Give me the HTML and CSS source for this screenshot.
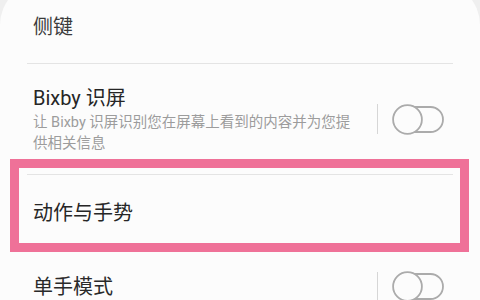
FILE: index.html
```html
<!DOCTYPE html>
<html lang="zh">
<head>
<meta charset="utf-8">
<link rel="stylesheet" href="styles.css">
</head>
<body>
<div class="card">
  <div class="list">
    <div class="row row-top"><span class="title">侧键</span></div>
    <div class="divider"></div>
    <div class="row row-bixby">
      <div class="text">
        <div class="title">Bixby 识屏</div>
        <div class="sub">让 Bixby 识屏识别您在屏幕上看到的内容并为您提供相关信息</div>
      </div>
      <div class="sep"></div>
      <svg class="toggle" width="52" height="31" viewBox="0 0 52 31">
        <rect x="4" y="3" width="47" height="25" rx="12.5" fill="none" stroke="#ababab" stroke-width="1.8"/>
        <circle cx="15.5" cy="15.5" r="14.4" fill="#fcfcfc" stroke="#ababab" stroke-width="1.8"/>
      </svg>
    </div>
    <div class="divider"></div>
    <div class="row row-motion"><span class="title">动作与手势</span></div>
    <div class="divider"></div>
    <div class="row row-one">
      <div class="text"><span class="title">单手模式</span></div>
      <div class="sep"></div>
      <svg class="toggle" width="52" height="31" viewBox="0 0 52 31">
        <rect x="4" y="3" width="47" height="25" rx="12.5" fill="none" stroke="#ababab" stroke-width="1.8"/>
        <circle cx="15.5" cy="15.5" r="14.4" fill="#fcfcfc" stroke="#ababab" stroke-width="1.8"/>
      </svg>
    </div>
    <div class="highlight"></div>
  </div>
</div>
</body>
</html>
```
FILE: styles.css
```css
html, body {
  margin: 0;
  padding: 0;
  background: #efefef;
  font-family: Roboto, "Noto Sans CJK SC", sans-serif;
  overflow: hidden;
}
.card {
  margin-top: -18px;
  padding-top: 18px;
  background: #fcfcfc;
  border-radius: 43px 43px 0 0;
  min-height: 340px;
}
.list {
  position: relative;
}
.row {
  display: flex;
  align-items: center;
  box-sizing: border-box;
  padding-left: 33px;
  padding-right: 36px;
}
.title {
  font-size: 20px;
  line-height: 28px;
  color: #262626;
}
.row-top {
  height: 63px;
  align-items: flex-start;
  padding-top: 13px;
}
.row-top .title {
  color: #3a3a3a;
}
.divider {
  height: 1px;
  margin: 0 27px;
  background: #e4e4e4;
}
.row-bixby {
  padding-top: 20px;
  padding-bottom: 20px;
}
.text {
  flex: 1;
  min-width: 0;
  padding-right: 14px;
}
.sub {
  font-size: 14.5px;
  line-height: 21px;
  color: #9c9c9c;
}
.sep {
  width: 1px;
  height: 30px;
  background: #d6d6d6;
  margin-right: 14px;
  flex: none;
}
.toggle {
  display: block;
  flex: none;
}
.row-motion {
  padding-top: 24px;
  padding-bottom: 24px;
}
.row-one {
  padding-top: 19px;
  padding-bottom: 19px;
}
.row-one .title {
  color: #2a2a2a;
}
.highlight {
  position: absolute;
  left: 10px;
  top: 159px;
  width: 459px;
  height: 93px;
  box-sizing: border-box;
  border: 9px solid #ef7198;
}
```
